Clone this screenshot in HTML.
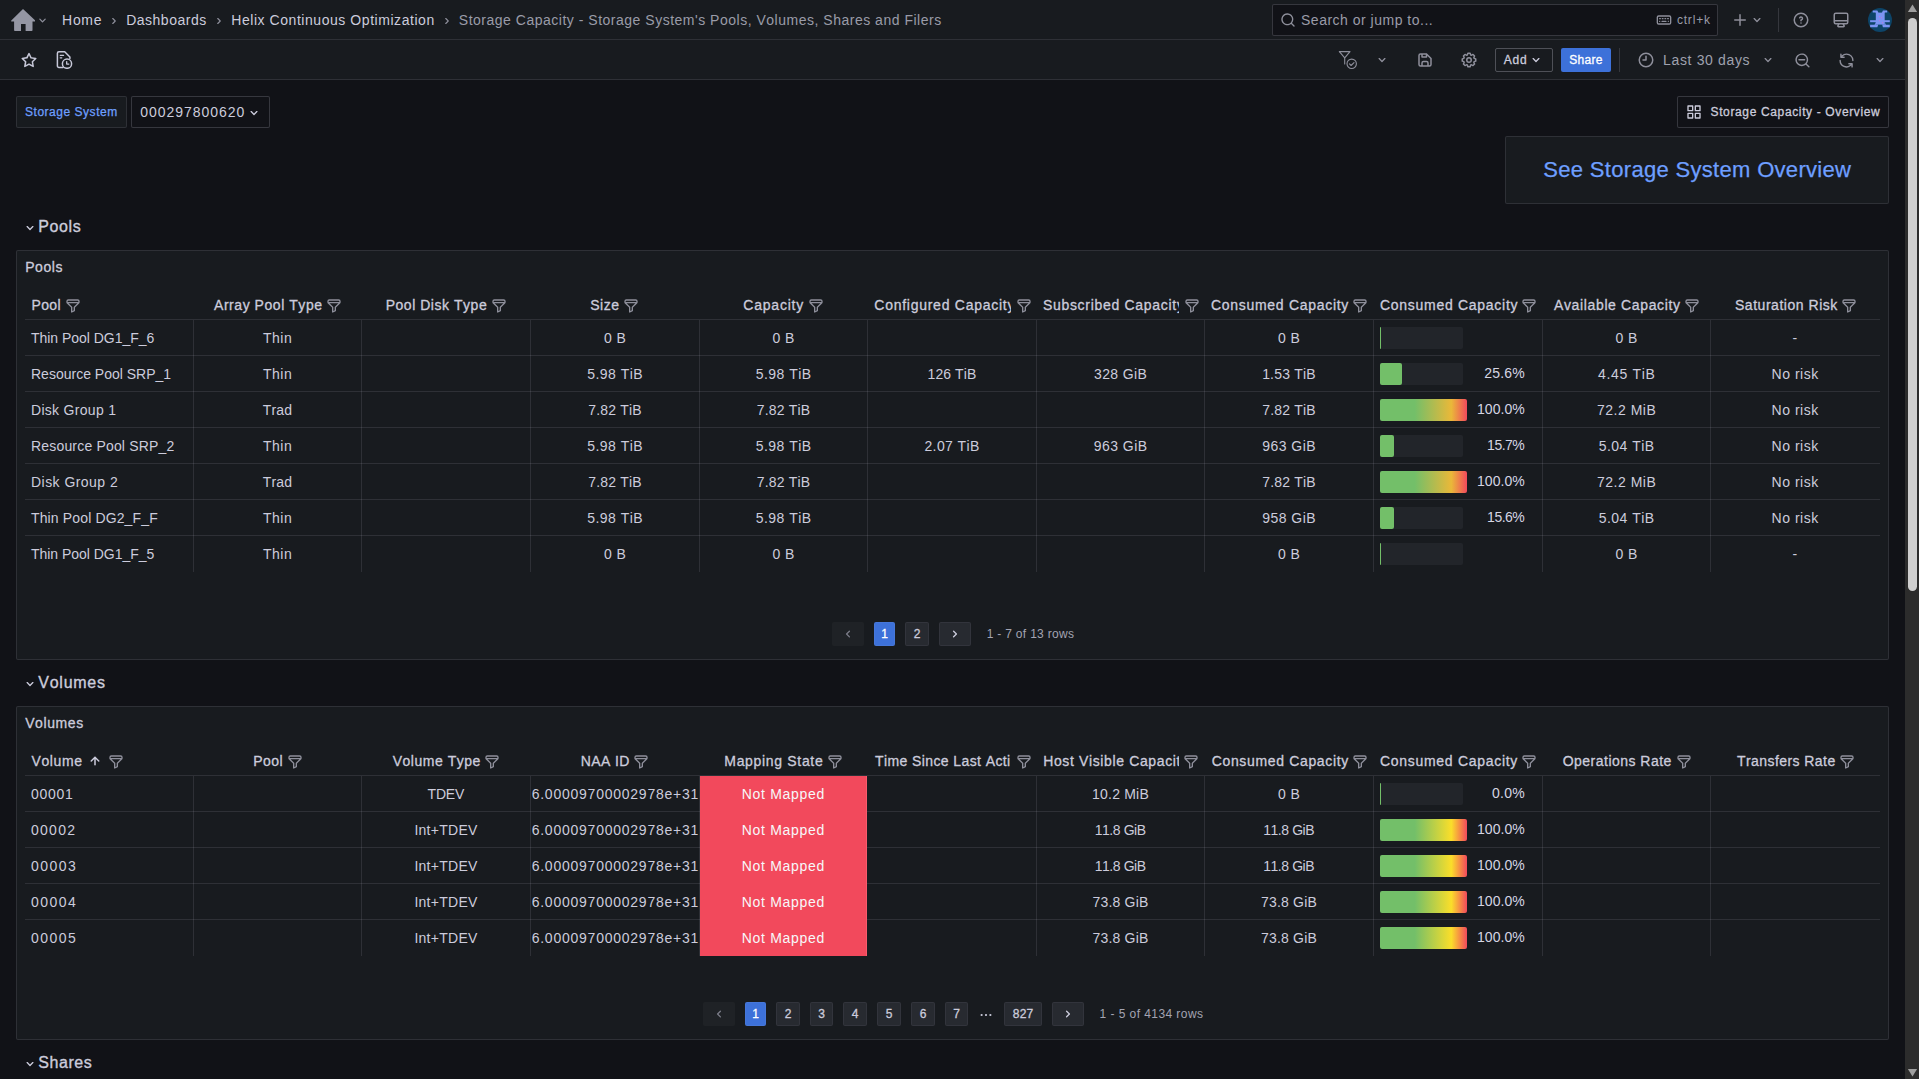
<!DOCTYPE html>
<html lang="en"><head><meta charset="utf-8"><title>Storage Capacity - Storage System's Pools, Volumes, Shares and Filers</title>
<style>
*{box-sizing:border-box;margin:0;padding:0}
html,body{width:1919px;height:1079px;overflow:hidden;background:#111217}
body{position:relative;font-family:"Liberation Sans",sans-serif;font-size:14px;color:#ccccdc;font-kerning:none;-webkit-font-smoothing:antialiased}
.t{position:absolute;white-space:nowrap;display:block}
.b{position:absolute}
.i{position:absolute;display:block}
.hl{position:absolute;height:1px;background:rgba(204,204,220,0.12)}
.vl{position:absolute;width:1px;background:rgba(204,204,220,0.12)}
.panel{position:absolute;background:#181b1f;border:1px solid rgba(204,204,220,0.12);border-radius:2px}
.pg{position:absolute;height:24px;border-radius:2px;background:rgba(204,204,220,0.09);border:1px solid rgba(204,204,220,0.07)}
.clip{position:absolute;overflow:hidden}
</style></head><body>

<div class="b" style="left:0px;top:0px;width:1905px;height:40px;background:#181b1f;border-bottom:1px solid rgba(204,204,220,0.12)"></div>
<div class="b" style="left:0px;top:40px;width:1905px;height:40px;background:#181b1f;border-bottom:1px solid rgba(204,204,220,0.12)"></div>
<svg class="i" style="left:11.00px;top:8.00px" width="24" height="24" viewBox="0 0 24 24" fill="#9496a3"><path d="M12 1.100.3 12.600a.55.55 0 0 0 .4.950H3.100v8.700a.8.8 0 0 0 .8.800H10V16h4.600v7.050h6.100a.8.8 0 0 0 .8-.800V13.550h2.400a.55.55 0 0 0 .4-.950Z"/></svg>
<svg class="i" style="left:34.50px;top:13.00px" width="15" height="15" viewBox="0 0 24 24" fill="#8e8f9b"><path d="M17,9.17a1,1,0,0,0-1.41,0L12,12.71,8.46,9.17a1,1,0,0,0-1.41,0,1,1,0,0,0,0,1.42l4.24,4.24a1,1,0,0,0,1.42,0L17,10.59A1,1,0,0,0,17,9.17Z"/></svg>
<span class="t" style="left:62.10px;top:10.00px;font-size:14px;line-height:20px;color:#ccccdc;letter-spacing:0.685px;">Home</span>
<svg class="i" style="left:107.00px;top:13.50px" width="14" height="14" viewBox="0 0 24 24" fill="#8e8f9b"><path d="M14.83,11.29,10.59,7.05a1,1,0,0,0-1.42,0,1,1,0,0,0,0,1.41L12.71,12,9.17,15.54a1,1,0,0,0,0,1.41,1,1,0,0,0,.71.29,1,1,0,0,0,.71-.29l4.24-4.24A1,1,0,0,0,14.83,11.29Z"/></svg>
<span class="t" style="left:126.20px;top:10.00px;font-size:14px;line-height:20px;color:#ccccdc;letter-spacing:0.501px;">Dashboards</span>
<svg class="i" style="left:212.00px;top:13.50px" width="14" height="14" viewBox="0 0 24 24" fill="#8e8f9b"><path d="M14.83,11.29,10.59,7.05a1,1,0,0,0-1.42,0,1,1,0,0,0,0,1.41L12.71,12,9.17,15.54a1,1,0,0,0,0,1.41,1,1,0,0,0,.71.29,1,1,0,0,0,.71-.29l4.24-4.24A1,1,0,0,0,14.83,11.29Z"/></svg>
<span class="t" style="left:231.30px;top:10.00px;font-size:14px;line-height:20px;color:#ccccdc;letter-spacing:0.549px;">Helix Continuous Optimization</span>
<svg class="i" style="left:440.00px;top:13.50px" width="14" height="14" viewBox="0 0 24 24" fill="#8e8f9b"><path d="M14.83,11.29,10.59,7.05a1,1,0,0,0-1.42,0,1,1,0,0,0,0,1.41L12.71,12,9.17,15.54a1,1,0,0,0,0,1.41,1,1,0,0,0,.71.29,1,1,0,0,0,.71-.29l4.24-4.24A1,1,0,0,0,14.83,11.29Z"/></svg>
<span class="t" style="left:458.80px;top:10.00px;font-size:14px;line-height:20px;color:#9a9ba8;letter-spacing:0.509px;">Storage Capacity - Storage System&#x27;s Pools, Volumes, Shares and Filers</span>
<div class="b" style="left:1272px;top:4px;width:446px;height:32px;background:#111217;border:1px solid rgba(204,204,220,0.2);border-radius:2px"></div>
<svg class="i" style="left:1280.00px;top:12.00px" width="16" height="16" viewBox="0 0 24 24" fill="#8e8f9b"><path d="M21.71,20.29,18,16.61A9,9,0,1,0,16.61,18l3.68,3.68a1,1,0,0,0,1.42,0A1,1,0,0,0,21.71,20.29ZM11,18a7,7,0,1,1,7-7A7,7,0,0,1,11,18Z"/></svg>
<span class="t" style="left:1301.00px;top:10.00px;font-size:14px;line-height:20px;color:#9a9ba8;letter-spacing:0.502px;">Search or jump to...</span>
<svg class="i" style="left:1656.00px;top:12.00px" width="16" height="16" viewBox="0 0 24 24" fill="#8e8f9b"><path d="M6.21,13.29a.93.93,0,0,0-.33-.21,1,1,0,0,0-.76,0,.9.9,0,0,0-.54.54,1,1,0,1,0,1.84,0A1,1,0,0,0,6.21,13.29ZM13.5,11h1a1,1,0,0,0,0-2h-1a1,1,0,0,0,0,2Zm-4,0h1a1,1,0,0,0,0-2h-1a1,1,0,0,0,0,2Zm-3-2h-1a1,1,0,0,0,0,2h1a1,1,0,0,0,0-2ZM20,5H4A3,3,0,0,0,1,8v8a3,3,0,0,0,3,3H20a3,3,0,0,0,3-3V8A3,3,0,0,0,20,5Zm1,11a1,1,0,0,1-1,1H4a1,1,0,0,1-1-1V8A1,1,0,0,1,4,7H20a1,1,0,0,1,1,1Zm-6-3H9a1,1,0,0,0,0,2h6a1,1,0,0,0,0-2Zm3.5-4h-1a1,1,0,0,0,0,2h1a1,1,0,0,0,0-2Zm.71,4.29a1,1,0,0,0-.33-.21,1,1,0,0,0-.76,0,.93.93,0,0,0-.33.21,1,1,0,0,0-.21.33A1,1,0,1,0,19.5,14a.84.84,0,0,0-.08-.38A1,1,0,0,0,19.21,13.29Z"/></svg>
<span class="t" style="left:1676.90px;top:11.00px;font-size:12px;line-height:18px;color:#9a9ba8;letter-spacing:0.819px;">ctrl+k</span>
<svg class="i" style="left:1731.00px;top:11.00px" width="18" height="18" viewBox="0 0 24 24" fill="#8e8f9b"><path d="M19,11H13V5a1,1,0,0,0-2,0v6H5a1,1,0,0,0,0,2h6v6a1,1,0,0,0,2,0V13h6a1,1,0,0,0,0-2Z"/></svg>
<svg class="i" style="left:1749.00px;top:12.00px" width="16" height="16" viewBox="0 0 24 24" fill="#8e8f9b"><path d="M17,9.17a1,1,0,0,0-1.41,0L12,12.71,8.46,9.17a1,1,0,0,0-1.41,0,1,1,0,0,0,0,1.42l4.24,4.24a1,1,0,0,0,1.42,0L17,10.59A1,1,0,0,0,17,9.17Z"/></svg>
<div class="b" style="left:1778px;top:8px;width:1px;height:24px;background:rgba(204,204,220,0.16)"></div>
<svg class="i" style="left:1792.00px;top:11.00px" width="18" height="18" viewBox="0 0 24 24" fill="#8e8f9b"><path d="M11.29,15.29a1.58,1.58,0,0,0-.12.15.76.76,0,0,0-.09.18.64.64,0,0,0-.06.18,1.36,1.36,0,0,0,0,.2.84.84,0,0,0,.08.38.9.9,0,0,0,.54.54.94.94,0,0,0,.76,0,.9.9,0,0,0,.54-.54A1,1,0,0,0,13,16a1,1,0,0,0-.29-.71A1,1,0,0,0,11.29,15.29ZM12,2A10,10,0,1,0,22,12,10,10,0,0,0,12,2Zm0,18a8,8,0,1,1,8-8A8,8,0,0,1,12,20ZM12,7A3,3,0,0,0,9.4,8.5a1,1,0,1,0,1.73,1A1,1,0,0,1,12,9a1,1,0,0,1,0,2,1,1,0,0,0-1,1v1a1,1,0,0,0,2,0v-.18A3,3,0,0,0,12,7Z"/></svg>
<svg class="i" style="left:1832.00px;top:11.00px" width="18" height="18" viewBox="0 0 24 24" fill="#8e8f9b"><path d="M19,2H5A3,3,0,0,0,2,5V15a3,3,0,0,0,3,3H7.64l-.58,1a2,2,0,0,0,0,2,2,2,0,0,0,1.75,1h6.46A2,2,0,0,0,17,21a2,2,0,0,0,0-2l-.59-1H19a3,3,0,0,0,3-3V5A3,3,0,0,0,19,2ZM8.77,20,10,18H14l1.2,2ZM20,15a1,1,0,0,1-1,1H5a1,1,0,0,1-1-1V14H20Zm0-3H4V5A1,1,0,0,1,5,4H19a1,1,0,0,1,1,1Z"/></svg>
<svg class="i" style="left:1868px;top:8px" width="24" height="24" viewBox="0 0 24 24"><circle cx="12" cy="12" r="12" fill="#0d4468"/><g fill="#7b94f3"><path d="M7.800 4.600h8.900v12H7.800z"/><path d="M4.700 2.400h4.700l1.100 2.500H8l-.7-.300H4.700z"/><path d="M19.200 2.400h-4.300l-1.100 2.500h2.600l.7-.300h2.100z"/><path d="M2.100 12.200h19.700v2H2.100z"/><path d="M7.800 14 6.600 16.700H2.100v2.600h7.300l.8-2.900H7.800z"/><path d="M16.700 14l1.100 2.700h4v2.600h-6.900l-.7-2.900h2.500z"/></g><g fill="#d070d8"><rect x="11.100" y="8.300" width=".9" height=".9"/><rect x="13.100" y="9.300" width=".9" height=".9"/><rect x="11.100" y="12.300" width=".9" height=".9"/><rect x="14.100" y="14.300" width=".9" height=".9"/></g></svg>
<svg class="i" style="left:19.70px;top:50.70px" width="18" height="18" viewBox="0 0 24 24" fill="#c7c8d8"><path d="M22,9.67A1,1,0,0,0,21.14,9l-5.69-.83L12.9,3a1,1,0,0,0-1.8,0L8.55,8.16,2.86,9a1,1,0,0,0-.81.68,1,1,0,0,0,.25,1l4.13,4-1,5.68A1,1,0,0,0,6.9,21.44L12,18.77l5.1,2.67a.93.93,0,0,0,.46.12,1,1,0,0,0,.59-.19,1,1,0,0,0,.4-1l-1-5.68,4.13-4A1,1,0,0,0,22,9.67Zm-6.15,4a1,1,0,0,0-.29.88l.72,4.2-3.76-2a1.06,1.06,0,0,0-.94,0l-3.76,2,.72-4.2a1,1,0,0,0-.29-.88l-3-3,4.21-.61a1,1,0,0,0,.76-.55L12,5.7l1.88,3.82a1,1,0,0,0,.76.55l4.21.61Z"/></svg>
<svg class="i" style="left:54.900px;top:50px" width="19" height="19" viewBox="0 0 19 19" fill="none" stroke="#c7c8d8" stroke-width="1.500" stroke-linecap="round" stroke-linejoin="round"><path d="M8 17.400H3.900a1.500 1.500 0 0 1-1.500-1.500V3.200a1.500 1.500 0 0 1 1.500-1.500h5.800l5.200 5.300v1.600"/><path d="M5.200 5.300h3.400M5.200 7.800h1.600" stroke-width="1.200"/><circle cx="12" cy="13.700" r="4.600" fill="#181b1f"/><path d="M11.700 11.600v2.500h2.100" stroke-width="1.300"/></svg>
<svg class="i" style="left:1338px;top:50px" width="20" height="20" viewBox="0 0 20 20" fill="none" stroke="#8e8f9b" stroke-width="1.100" stroke-linecap="round" stroke-linejoin="round"><path d="M1.400 1.600h10.600L6.700 7.800v6.200"/><path d="M1.400 1.600 6.700 7.800"/><circle cx="13.700" cy="13.800" r="4.700" fill="#181b1f"/><path d="M11.500 13.900l1.600 1.600 2.900-2.900"/></svg>
<svg class="i" style="left:1374.00px;top:52.00px" width="16" height="16" viewBox="0 0 24 24" fill="#8e8f9b"><path d="M17,9.17a1,1,0,0,0-1.41,0L12,12.71,8.46,9.17a1,1,0,0,0-1.41,0,1,1,0,0,0,0,1.42l4.24,4.24a1,1,0,0,0,1.42,0L17,10.59A1,1,0,0,0,17,9.17Z"/></svg>
<svg class="i" style="left:1416.00px;top:51.00px" width="18" height="18" viewBox="0 0 24 24" fill="#8e8f9b"><path d="M20.71,9.29l-6-6a1,1,0,0,0-.32-.21A1.09,1.09,0,0,0,14,3H6A3,3,0,0,0,3,6V18a3,3,0,0,0,3,3H18a3,3,0,0,0,3-3V10A1,1,0,0,0,20.71,9.29ZM9,5h4V7H9Zm6,14H9V16a1,1,0,0,1,1-1h4a1,1,0,0,1,1,1Zm4-1a1,1,0,0,1-1,1H17V16a3,3,0,0,0-3-3H10a3,3,0,0,0-3,3v3H6a1,1,0,0,1-1-1V6A1,1,0,0,1,6,5H7V8A1,1,0,0,0,8,9h6a1,1,0,0,0,1-1V6.41l4,4Z"/></svg>
<svg class="i" style="left:1460.00px;top:51.00px" width="18" height="18" viewBox="0 0 24 24" fill="#8e8f9b"><path d="M21.32,9.55l-1.89-.63.89-1.78A1,1,0,0,0,20.13,6L18,3.87a1,1,0,0,0-1.15-.19l-1.78.89-.63-1.89A1,1,0,0,0,13.5,2h-3a1,1,0,0,0-.95.68L8.92,4.57,7.14,3.68A1,1,0,0,0,6,3.87L3.87,6a1,1,0,0,0-.19,1.15l.89,1.78-1.89.63A1,1,0,0,0,2,10.5v3a1,1,0,0,0,.68.95l1.89.63-.89,1.78A1,1,0,0,0,3.87,18L6,20.13a1,1,0,0,0,1.15.19l1.78-.89.63,1.89a1,1,0,0,0,.95.68h3a1,1,0,0,0,.95-.68l.63-1.89,1.78.89A1,1,0,0,0,18,20.13L20.13,18a1,1,0,0,0,.19-1.15l-.89-1.78,1.89-.63A1,1,0,0,0,22,13.5v-3A1,1,0,0,0,21.32,9.55ZM20,12.78l-1.2.4A2,2,0,0,0,17.64,16l.57,1.14-1.1,1.1L16,17.64a2,2,0,0,0-2.79,1.16l-.4,1.2H11.22l-.4-1.2A2,2,0,0,0,8,17.64l-1.14.57-1.1-1.1L6.36,16A2,2,0,0,0,5.2,13.18L4,12.78V11.22l1.2-.4A2,2,0,0,0,6.36,8L5.79,6.89l1.1-1.1L8,6.36A2,2,0,0,0,10.82,5.2l.4-1.2h1.56l.4,1.2A2,2,0,0,0,16,6.36l1.14-.57,1.1,1.1L17.64,8a2,2,0,0,0,1.16,2.79l1.2.4ZM12,8a4,4,0,1,0,4,4A4,4,0,0,0,12,8Zm0,6a2,2,0,1,1,2-2A2,2,0,0,1,12,14Z"/></svg>
<div class="b" style="left:1495px;top:48px;width:58px;height:24px;border:1px solid rgba(204,204,220,0.30);border-radius:2px"></div>
<span class="t" style="left:1503.80px;top:51.00px;font-size:12px;line-height:18px;color:#ccccdc;letter-spacing:0.774px;-webkit-text-stroke:0.3px #ccccdc;">Add</span>
<svg class="i" style="left:1528.00px;top:52.00px" width="16" height="16" viewBox="0 0 24 24" fill="#ccccdc"><path d="M17,9.17a1,1,0,0,0-1.41,0L12,12.71,8.46,9.17a1,1,0,0,0-1.41,0,1,1,0,0,0,0,1.42l4.24,4.24a1,1,0,0,0,1.42,0L17,10.59A1,1,0,0,0,17,9.17Z"/></svg>
<div class="b" style="left:1561px;top:48px;width:50px;height:24px;background:#3d71d9;border-radius:2px"></div>
<span class="t" style="left:1569.20px;top:51.00px;font-size:12px;line-height:18px;color:#ffffff;letter-spacing:0.319px;-webkit-text-stroke:0.3px #ffffff;">Share</span>
<div class="b" style="left:1619px;top:48px;width:1px;height:24px;background:rgba(204,204,220,0.16)"></div>
<svg class="i" style="left:1637.00px;top:51.00px" width="18" height="18" viewBox="0 0 24 24" fill="#8e8f9b"><path d="M12,2A10,10,0,1,0,22,12,10.01,10.01,0,0,0,12,2Zm0,18a8,8,0,1,1,8-8A8.01,8.01,0,0,1,12,20ZM12,6a1,1,0,0,0-1,1v4H8a1,1,0,0,0,0,2h4a1,1,0,0,0,1-1V7A1,1,0,0,0,12,6Z"/></svg>
<span class="t" style="left:1663.10px;top:50.00px;font-size:14px;line-height:20px;color:#9fa1ae;letter-spacing:0.647px;">Last 30 days</span>
<svg class="i" style="left:1760.00px;top:52.00px" width="16" height="16" viewBox="0 0 24 24" fill="#8e8f9b"><path d="M17,9.17a1,1,0,0,0-1.41,0L12,12.71,8.46,9.17a1,1,0,0,0-1.41,0,1,1,0,0,0,0,1.42l4.24,4.24a1,1,0,0,0,1.42,0L17,10.59A1,1,0,0,0,17,9.17Z"/></svg>
<svg class="i" style="left:1793.50px;top:51.50px" width="17" height="17" viewBox="0 0 24 24" fill="#8e8f9b"><path d="M21.71,20.29,18,16.61A9,9,0,1,0,16.61,18l3.68,3.68a1,1,0,0,0,1.42,0A1,1,0,0,0,21.71,20.29ZM11,18a7,7,0,1,1,7-7A7,7,0,0,1,11,18ZM15,10H7a1,1,0,0,0,0,2h8a1,1,0,0,0,0-2Z"/></svg>
<svg class="i" style="left:1837.50px;top:51.50px" width="17" height="17" viewBox="0 0 24 24" fill="#8e8f9b"><path d="M19.91,15.51H15.38a1,1,0,0,0,0,2h2.4A8,8,0,0,1,4,12a1,1,0,0,0-2,0,10,10,0,0,0,16.88,7.23V21a1,1,0,0,0,2,0V16.5A1,1,0,0,0,19.91,15.51ZM12,2A10,10,0,0,0,5.12,4.77V3a1,1,0,0,0-2,0V7.5a1,1,0,0,0,1,1h4.5a1,1,0,0,0,0-2H6.22A8,8,0,0,1,20,12a1,1,0,0,0,2,0A10,10,0,0,0,12,2Z"/></svg>
<svg class="i" style="left:1872.00px;top:52.00px" width="16" height="16" viewBox="0 0 24 24" fill="#8e8f9b"><path d="M17,9.17a1,1,0,0,0-1.41,0L12,12.71,8.46,9.17a1,1,0,0,0-1.41,0,1,1,0,0,0,0,1.42l4.24,4.24a1,1,0,0,0,1.42,0L17,10.59A1,1,0,0,0,17,9.17Z"/></svg>
<div class="b" style="left:16px;top:96px;width:111px;height:32px;background:#181b1f;border:1px solid rgba(204,204,220,0.12);border-radius:2px"></div>
<span class="t" style="left:25.00px;top:103.30px;font-size:12px;line-height:18px;color:#6e9fff;letter-spacing:0.525px;-webkit-text-stroke:0.25px #6e9fff;">Storage System</span>
<div class="b" style="left:131px;top:96px;width:139px;height:32px;background:#111217;border:1px solid rgba(204,204,220,0.2);border-radius:2px"></div>
<span class="t" style="left:140.20px;top:102.00px;font-size:14px;line-height:20px;color:#ccccdc;letter-spacing:0.970px;">000297800620</span>
<svg class="i" style="left:245.80px;top:104.50px" width="16" height="16" viewBox="0 0 24 24" fill="#ccccdc"><path d="M17,9.17a1,1,0,0,0-1.41,0L12,12.71,8.46,9.17a1,1,0,0,0-1.41,0,1,1,0,0,0,0,1.42l4.24,4.24a1,1,0,0,0,1.42,0L17,10.59A1,1,0,0,0,17,9.17Z"/></svg>
<div class="b" style="left:1677px;top:96px;width:212px;height:32px;border:1px solid rgba(204,204,220,0.2);border-radius:2px;background:#111217"></div>
<svg class="i" style="left:1685.70px;top:104.00px" width="16" height="16" viewBox="0 0 24 24" fill="#ccccdc"><path d="M10,13H3a1,1,0,0,0-1,1v7a1,1,0,0,0,1,1h7a1,1,0,0,0,1-1V14A1,1,0,0,0,10,13ZM9,20H4V15H9ZM21,2H14a1,1,0,0,0-1,1v7a1,1,0,0,0,1,1h7a1,1,0,0,0,1-1V3A1,1,0,0,0,21,2ZM20,9H15V4h5Zm1,4H14a1,1,0,0,0-1,1v7a1,1,0,0,0,1,1h7a1,1,0,0,0,1-1V14A1,1,0,0,0,21,13Zm-1,7H15V15h5ZM10,2H3A1,1,0,0,0,2,3v7a1,1,0,0,0,1,1h7a1,1,0,0,0,1-1V3A1,1,0,0,0,10,2ZM9,9H4V4H9Z"/></svg>
<span class="t" style="left:1710.50px;top:103.30px;font-size:12px;line-height:18px;color:#ccccdc;letter-spacing:0.637px;-webkit-text-stroke:0.3px #ccccdc;">Storage Capacity - Overview</span>
<div class="panel" style="left:1505px;top:136px;width:384px;height:68px"></div>
<span class="t" style="left:1543.30px;top:155.80px;font-size:22px;line-height:28px;color:#6e9fff;letter-spacing:0.313px;-webkit-text-stroke:0.25px #6e9fff;">See Storage System Overview</span>
<svg class="i" style="left:22.00px;top:220.00px" width="16" height="16" viewBox="0 0 24 24" fill="#ccccdc"><path d="M17,9.17a1,1,0,0,0-1.41,0L12,12.71,8.46,9.17a1,1,0,0,0-1.41,0,1,1,0,0,0,0,1.42l4.24,4.24a1,1,0,0,0,1.42,0L17,10.59A1,1,0,0,0,17,9.17Z"/></svg>
<span class="t" style="left:38.30px;top:215.50px;font-size:16px;line-height:22px;color:#ccccdc;letter-spacing:0.619px;-webkit-text-stroke:0.35px #ccccdc;">Pools</span>
<svg class="i" style="left:22.00px;top:676.00px" width="16" height="16" viewBox="0 0 24 24" fill="#ccccdc"><path d="M17,9.17a1,1,0,0,0-1.41,0L12,12.71,8.46,9.17a1,1,0,0,0-1.41,0,1,1,0,0,0,0,1.42l4.24,4.24a1,1,0,0,0,1.42,0L17,10.59A1,1,0,0,0,17,9.17Z"/></svg>
<span class="t" style="left:38.30px;top:671.50px;font-size:16px;line-height:22px;color:#ccccdc;letter-spacing:0.742px;-webkit-text-stroke:0.35px #ccccdc;">Volumes</span>
<svg class="i" style="left:22.00px;top:1056.00px" width="16" height="16" viewBox="0 0 24 24" fill="#ccccdc"><path d="M17,9.17a1,1,0,0,0-1.41,0L12,12.71,8.46,9.17a1,1,0,0,0-1.41,0,1,1,0,0,0,0,1.42l4.24,4.24a1,1,0,0,0,1.42,0L17,10.59A1,1,0,0,0,17,9.17Z"/></svg>
<span class="t" style="left:38.30px;top:1051.50px;font-size:16px;line-height:22px;color:#ccccdc;letter-spacing:0.541px;-webkit-text-stroke:0.35px #ccccdc;">Shares</span>
<div class="panel" style="left:16px;top:250px;width:1873px;height:410px"></div>
<span class="t" style="left:25.20px;top:257.00px;font-size:14px;line-height:20px;color:#ccccdc;letter-spacing:0.570px;-webkit-text-stroke:0.3px #ccccdc;">Pools</span>
<div class="hl" style="left:25px;top:319px;width:1855px"></div>
<span class="t" style="left:31.50px;top:295.20px;font-size:14px;line-height:20px;color:#ccccdc;letter-spacing:0.359px;-webkit-text-stroke:0.3px #ccccdc;">Pool</span>
<svg class="i" style="left:65.20px;top:298.00px" width="16" height="16" viewBox="0 0 24 24" fill="#8e8f9b"><path d="M19,2H5A3,3,0,0,0,2,5V6.17a3,3,0,0,0,.25,1.2l0,.06a2.81,2.81,0,0,0,.59.86L9,14.41V21a1,1,0,0,0,.47.85A1,1,0,0,0,10,22a1,1,0,0,0,.45-.11l4-2A1,1,0,0,0,15,19V14.41l6.12-6.12a2.81,2.81,0,0,0,.59-.86l0-.06A3,3,0,0,0,22,6.17V5A3,3,0,0,0,19,2ZM13.29,13.29A1,1,0,0,0,13,14v4.38l-2,1V14a1,1,0,0,0-.29-.71L5.41,8H18.59ZM20,6H4V5A1,1,0,0,1,5,4H19a1,1,0,0,1,1,1Z"/></svg>
<span class="t" style="left:214.00px;top:295.20px;font-size:14px;line-height:20px;color:#ccccdc;letter-spacing:0.545px;-webkit-text-stroke:0.3px #ccccdc;">Array Pool Type</span>
<svg class="i" style="left:325.50px;top:298.00px" width="16" height="16" viewBox="0 0 24 24" fill="#8e8f9b"><path d="M19,2H5A3,3,0,0,0,2,5V6.17a3,3,0,0,0,.25,1.2l0,.06a2.81,2.81,0,0,0,.59.86L9,14.41V21a1,1,0,0,0,.47.85A1,1,0,0,0,10,22a1,1,0,0,0,.45-.11l4-2A1,1,0,0,0,15,19V14.41l6.12-6.12a2.81,2.81,0,0,0,.59-.86l0-.06A3,3,0,0,0,22,6.17V5A3,3,0,0,0,19,2ZM13.29,13.29A1,1,0,0,0,13,14v4.38l-2,1V14a1,1,0,0,0-.29-.71L5.41,8H18.59ZM20,6H4V5A1,1,0,0,1,5,4H19a1,1,0,0,1,1,1Z"/></svg>
<span class="t" style="left:385.70px;top:295.20px;font-size:14px;line-height:20px;color:#ccccdc;letter-spacing:0.527px;-webkit-text-stroke:0.3px #ccccdc;">Pool Disk Type</span>
<svg class="i" style="left:490.50px;top:298.00px" width="16" height="16" viewBox="0 0 24 24" fill="#8e8f9b"><path d="M19,2H5A3,3,0,0,0,2,5V6.17a3,3,0,0,0,.25,1.2l0,.06a2.81,2.81,0,0,0,.59.86L9,14.41V21a1,1,0,0,0,.47.85A1,1,0,0,0,10,22a1,1,0,0,0,.45-.11l4-2A1,1,0,0,0,15,19V14.41l6.12-6.12a2.81,2.81,0,0,0,.59-.86l0-.06A3,3,0,0,0,22,6.17V5A3,3,0,0,0,19,2ZM13.29,13.29A1,1,0,0,0,13,14v4.38l-2,1V14a1,1,0,0,0-.29-.71L5.41,8H18.59ZM20,6H4V5A1,1,0,0,1,5,4H19a1,1,0,0,1,1,1Z"/></svg>
<span class="t" style="left:590.30px;top:295.20px;font-size:14px;line-height:20px;color:#ccccdc;letter-spacing:0.489px;-webkit-text-stroke:0.3px #ccccdc;">Size</span>
<svg class="i" style="left:622.50px;top:298.00px" width="16" height="16" viewBox="0 0 24 24" fill="#8e8f9b"><path d="M19,2H5A3,3,0,0,0,2,5V6.17a3,3,0,0,0,.25,1.2l0,.06a2.81,2.81,0,0,0,.59.86L9,14.41V21a1,1,0,0,0,.47.85A1,1,0,0,0,10,22a1,1,0,0,0,.45-.11l4-2A1,1,0,0,0,15,19V14.41l6.12-6.12a2.81,2.81,0,0,0,.59-.86l0-.06A3,3,0,0,0,22,6.17V5A3,3,0,0,0,19,2ZM13.29,13.29A1,1,0,0,0,13,14v4.38l-2,1V14a1,1,0,0,0-.29-.71L5.41,8H18.59ZM20,6H4V5A1,1,0,0,1,5,4H19a1,1,0,0,1,1,1Z"/></svg>
<span class="t" style="left:743.30px;top:295.20px;font-size:14px;line-height:20px;color:#ccccdc;letter-spacing:0.790px;-webkit-text-stroke:0.3px #ccccdc;">Capacity</span>
<svg class="i" style="left:807.50px;top:298.00px" width="16" height="16" viewBox="0 0 24 24" fill="#8e8f9b"><path d="M19,2H5A3,3,0,0,0,2,5V6.17a3,3,0,0,0,.25,1.2l0,.06a2.81,2.81,0,0,0,.59.86L9,14.41V21a1,1,0,0,0,.47.85A1,1,0,0,0,10,22a1,1,0,0,0,.45-.11l4-2A1,1,0,0,0,15,19V14.41l6.12-6.12a2.81,2.81,0,0,0,.59-.86l0-.06A3,3,0,0,0,22,6.17V5A3,3,0,0,0,19,2ZM13.29,13.29A1,1,0,0,0,13,14v4.38l-2,1V14a1,1,0,0,0-.29-.71L5.41,8H18.59ZM20,6H4V5A1,1,0,0,1,5,4H19a1,1,0,0,1,1,1Z"/></svg>
<div class="clip" style="left:872.30px;top:294.2px;width:138.60px;height:24px">
<span class="t" style="left:2.00px;top:1.00px;font-size:14px;line-height:20px;color:#ccccdc;letter-spacing:0.738px;-webkit-text-stroke:0.3px #ccccdc;">Configured Capacity</span>
</div>
<svg class="i" style="left:1015.50px;top:298.00px" width="16" height="16" viewBox="0 0 24 24" fill="#8e8f9b"><path d="M19,2H5A3,3,0,0,0,2,5V6.17a3,3,0,0,0,.25,1.2l0,.06a2.81,2.81,0,0,0,.59.86L9,14.41V21a1,1,0,0,0,.47.85A1,1,0,0,0,10,22a1,1,0,0,0,.45-.11l4-2A1,1,0,0,0,15,19V14.41l6.12-6.12a2.81,2.81,0,0,0,.59-.86l0-.06A3,3,0,0,0,22,6.17V5A3,3,0,0,0,19,2ZM13.29,13.29A1,1,0,0,0,13,14v4.38l-2,1V14a1,1,0,0,0-.29-.71L5.41,8H18.59ZM20,6H4V5A1,1,0,0,1,5,4H19a1,1,0,0,1,1,1Z"/></svg>
<div class="clip" style="left:1040.90px;top:294.2px;width:138.00px;height:24px">
<span class="t" style="left:2.00px;top:1.00px;font-size:14px;line-height:20px;color:#ccccdc;letter-spacing:0.700px;-webkit-text-stroke:0.3px #ccccdc;">Subscribed Capacity</span>
</div>
<svg class="i" style="left:1183.50px;top:298.00px" width="16" height="16" viewBox="0 0 24 24" fill="#8e8f9b"><path d="M19,2H5A3,3,0,0,0,2,5V6.17a3,3,0,0,0,.25,1.2l0,.06a2.81,2.81,0,0,0,.59.86L9,14.41V21a1,1,0,0,0,.47.85A1,1,0,0,0,10,22a1,1,0,0,0,.45-.11l4-2A1,1,0,0,0,15,19V14.41l6.12-6.12a2.81,2.81,0,0,0,.59-.86l0-.06A3,3,0,0,0,22,6.17V5A3,3,0,0,0,19,2ZM13.29,13.29A1,1,0,0,0,13,14v4.38l-2,1V14a1,1,0,0,0-.29-.71L5.41,8H18.59ZM20,6H4V5A1,1,0,0,1,5,4H19a1,1,0,0,1,1,1Z"/></svg>
<span class="t" style="left:1211.00px;top:295.20px;font-size:14px;line-height:20px;color:#ccccdc;letter-spacing:0.702px;-webkit-text-stroke:0.3px #ccccdc;">Consumed Capacity</span>
<svg class="i" style="left:1351.90px;top:298.00px" width="16" height="16" viewBox="0 0 24 24" fill="#8e8f9b"><path d="M19,2H5A3,3,0,0,0,2,5V6.17a3,3,0,0,0,.25,1.2l0,.06a2.81,2.81,0,0,0,.59.86L9,14.41V21a1,1,0,0,0,.47.85A1,1,0,0,0,10,22a1,1,0,0,0,.45-.11l4-2A1,1,0,0,0,15,19V14.41l6.12-6.12a2.81,2.81,0,0,0,.59-.86l0-.06A3,3,0,0,0,22,6.17V5A3,3,0,0,0,19,2ZM13.29,13.29A1,1,0,0,0,13,14v4.38l-2,1V14a1,1,0,0,0-.29-.71L5.41,8H18.59ZM20,6H4V5A1,1,0,0,1,5,4H19a1,1,0,0,1,1,1Z"/></svg>
<span class="t" style="left:1380.00px;top:295.20px;font-size:14px;line-height:20px;color:#ccccdc;letter-spacing:0.715px;-webkit-text-stroke:0.3px #ccccdc;">Consumed Capacity</span>
<svg class="i" style="left:1520.90px;top:298.00px" width="16" height="16" viewBox="0 0 24 24" fill="#8e8f9b"><path d="M19,2H5A3,3,0,0,0,2,5V6.17a3,3,0,0,0,.25,1.2l0,.06a2.81,2.81,0,0,0,.59.86L9,14.41V21a1,1,0,0,0,.47.85A1,1,0,0,0,10,22a1,1,0,0,0,.45-.11l4-2A1,1,0,0,0,15,19V14.41l6.12-6.12a2.81,2.81,0,0,0,.59-.86l0-.06A3,3,0,0,0,22,6.17V5A3,3,0,0,0,19,2ZM13.29,13.29A1,1,0,0,0,13,14v4.38l-2,1V14a1,1,0,0,0-.29-.71L5.41,8H18.59ZM20,6H4V5A1,1,0,0,1,5,4H19a1,1,0,0,1,1,1Z"/></svg>
<span class="t" style="left:1554.00px;top:295.20px;font-size:14px;line-height:20px;color:#ccccdc;letter-spacing:0.637px;-webkit-text-stroke:0.3px #ccccdc;">Available Capacity</span>
<svg class="i" style="left:1683.90px;top:298.00px" width="16" height="16" viewBox="0 0 24 24" fill="#8e8f9b"><path d="M19,2H5A3,3,0,0,0,2,5V6.17a3,3,0,0,0,.25,1.2l0,.06a2.81,2.81,0,0,0,.59.86L9,14.41V21a1,1,0,0,0,.47.85A1,1,0,0,0,10,22a1,1,0,0,0,.45-.11l4-2A1,1,0,0,0,15,19V14.41l6.12-6.12a2.81,2.81,0,0,0,.59-.86l0-.06A3,3,0,0,0,22,6.17V5A3,3,0,0,0,19,2ZM13.29,13.29A1,1,0,0,0,13,14v4.38l-2,1V14a1,1,0,0,0-.29-.71L5.41,8H18.59ZM20,6H4V5A1,1,0,0,1,5,4H19a1,1,0,0,1,1,1Z"/></svg>
<span class="t" style="left:1735.00px;top:295.20px;font-size:14px;line-height:20px;color:#ccccdc;letter-spacing:0.526px;-webkit-text-stroke:0.3px #ccccdc;">Saturation Risk</span>
<svg class="i" style="left:1840.90px;top:298.00px" width="16" height="16" viewBox="0 0 24 24" fill="#8e8f9b"><path d="M19,2H5A3,3,0,0,0,2,5V6.17a3,3,0,0,0,.25,1.2l0,.06a2.81,2.81,0,0,0,.59.86L9,14.41V21a1,1,0,0,0,.47.85A1,1,0,0,0,10,22a1,1,0,0,0,.45-.11l4-2A1,1,0,0,0,15,19V14.41l6.12-6.12a2.81,2.81,0,0,0,.59-.86l0-.06A3,3,0,0,0,22,6.17V5A3,3,0,0,0,19,2ZM13.29,13.29A1,1,0,0,0,13,14v4.38l-2,1V14a1,1,0,0,0-.29-.71L5.41,8H18.59ZM20,6H4V5A1,1,0,0,1,5,4H19a1,1,0,0,1,1,1Z"/></svg>
<div class="hl" style="left:25px;top:355px;width:1855px"></div>
<div class="hl" style="left:25px;top:391px;width:1855px"></div>
<div class="hl" style="left:25px;top:427px;width:1855px"></div>
<div class="hl" style="left:25px;top:463px;width:1855px"></div>
<div class="hl" style="left:25px;top:499px;width:1855px"></div>
<div class="hl" style="left:25px;top:535px;width:1855px"></div>
<div class="vl" style="left:193px;top:320px;height:252px"></div>
<div class="vl" style="left:361px;top:320px;height:252px"></div>
<div class="vl" style="left:530px;top:320px;height:252px"></div>
<div class="vl" style="left:699px;top:320px;height:252px"></div>
<div class="vl" style="left:867px;top:320px;height:252px"></div>
<div class="vl" style="left:1036px;top:320px;height:252px"></div>
<div class="vl" style="left:1204px;top:320px;height:252px"></div>
<div class="vl" style="left:1373px;top:320px;height:252px"></div>
<div class="vl" style="left:1542px;top:320px;height:252px"></div>
<div class="vl" style="left:1710px;top:320px;height:252px"></div>
<span class="t" style="left:31.00px;top:328.30px;font-size:14px;line-height:20px;color:#ccccdc;letter-spacing:-0.027px;">Thin Pool DG1_F_6</span>
<span class="t" style="left:263.05px;top:328.30px;font-size:14px;line-height:20px;color:#ccccdc;letter-spacing:0.489px;">Thin</span>
<span class="t" style="left:604.05px;top:328.30px;font-size:14px;line-height:20px;color:#ccccdc;letter-spacing:0.342px;">0 B</span>
<span class="t" style="left:772.55px;top:328.30px;font-size:14px;line-height:20px;color:#ccccdc;letter-spacing:0.342px;">0 B</span>
<span class="t" style="left:1278.05px;top:328.30px;font-size:14px;line-height:20px;color:#ccccdc;letter-spacing:0.342px;">0 B</span>
<span class="t" style="left:1615.55px;top:328.30px;font-size:14px;line-height:20px;color:#ccccdc;letter-spacing:0.342px;">0 B</span>
<span class="t" style="left:1792.57px;top:328.30px;font-size:14px;line-height:20px;color:#ccccdc;">-</span>
<div class="b" style="left:1380px;top:327px;width:83px;height:22px;border-radius:2px;background:rgba(204,204,220,0.06)"></div>
<div class="b" style="left:1380px;top:327px;width:1px;height:22px;border-radius:1px 0 0 1px;background:#73bf69"></div>
<span class="t" style="left:31.00px;top:364.30px;font-size:14px;line-height:20px;color:#ccccdc;">Resource Pool SRP_1</span>
<span class="t" style="left:263.05px;top:364.30px;font-size:14px;line-height:20px;color:#ccccdc;letter-spacing:0.489px;">Thin</span>
<span class="t" style="left:587.25px;top:364.30px;font-size:14px;line-height:20px;color:#ccccdc;letter-spacing:0.452px;">5.98 TiB</span>
<span class="t" style="left:755.75px;top:364.30px;font-size:14px;line-height:20px;color:#ccccdc;letter-spacing:0.452px;">5.98 TiB</span>
<span class="t" style="left:927.55px;top:364.30px;font-size:14px;line-height:20px;color:#ccccdc;letter-spacing:0.075px;">126 TiB</span>
<span class="t" style="left:1094.05px;top:364.30px;font-size:14px;line-height:20px;color:#ccccdc;letter-spacing:0.352px;">328 GiB</span>
<span class="t" style="left:1262.15px;top:364.30px;font-size:14px;line-height:20px;color:#ccccdc;letter-spacing:0.194px;">1.53 TiB</span>
<span class="t" style="left:1598.05px;top:364.30px;font-size:14px;line-height:20px;color:#ccccdc;letter-spacing:0.652px;">4.45 TiB</span>
<span class="t" style="left:1771.55px;top:364.30px;font-size:14px;line-height:20px;color:#ccccdc;letter-spacing:0.523px;">No risk</span>
<div class="b" style="left:1380px;top:363px;width:83px;height:22px;border-radius:2px;background:rgba(204,204,220,0.06)"></div>
<div class="b" style="left:1380px;top:363px;width:22px;height:22px;border-radius:2px;background:#73bf69"></div>
<span class="t" style="left:1484.20px;top:363.20px;font-size:14px;line-height:20px;color:#d5d5e3;letter-spacing:0.226px;">25.6%</span>
<span class="t" style="left:31.00px;top:400.30px;font-size:14px;line-height:20px;color:#ccccdc;letter-spacing:0.300px;">Disk Group 1</span>
<span class="t" style="left:262.75px;top:400.30px;font-size:14px;line-height:20px;color:#ccccdc;letter-spacing:0.171px;">Trad</span>
<span class="t" style="left:588.25px;top:400.30px;font-size:14px;line-height:20px;color:#ccccdc;letter-spacing:0.166px;">7.82 TiB</span>
<span class="t" style="left:756.75px;top:400.30px;font-size:14px;line-height:20px;color:#ccccdc;letter-spacing:0.166px;">7.82 TiB</span>
<span class="t" style="left:1262.25px;top:400.30px;font-size:14px;line-height:20px;color:#ccccdc;letter-spacing:0.166px;">7.82 TiB</span>
<span class="t" style="left:1597.05px;top:400.30px;font-size:14px;line-height:20px;color:#ccccdc;letter-spacing:0.493px;">72.2 MiB</span>
<span class="t" style="left:1771.55px;top:400.30px;font-size:14px;line-height:20px;color:#ccccdc;letter-spacing:0.523px;">No risk</span>
<div class="b" style="left:1380px;top:399px;width:87px;height:22px;border-radius:2px;background:linear-gradient(90deg,#73bf69,#73bf69 40%,#eab839 82%,#f2495c)"></div>
<span class="t" style="left:1477.00px;top:399.20px;font-size:14px;line-height:20px;color:#d5d5e3;letter-spacing:0.063px;">100.0%</span>
<span class="t" style="left:31.00px;top:436.30px;font-size:14px;line-height:20px;color:#ccccdc;letter-spacing:0.179px;">Resource Pool SRP_2</span>
<span class="t" style="left:263.05px;top:436.30px;font-size:14px;line-height:20px;color:#ccccdc;letter-spacing:0.489px;">Thin</span>
<span class="t" style="left:587.25px;top:436.30px;font-size:14px;line-height:20px;color:#ccccdc;letter-spacing:0.452px;">5.98 TiB</span>
<span class="t" style="left:755.75px;top:436.30px;font-size:14px;line-height:20px;color:#ccccdc;letter-spacing:0.452px;">5.98 TiB</span>
<span class="t" style="left:924.40px;top:436.30px;font-size:14px;line-height:20px;color:#ccccdc;letter-spacing:0.409px;">2.07 TiB</span>
<span class="t" style="left:1093.75px;top:436.30px;font-size:14px;line-height:20px;color:#ccccdc;letter-spacing:0.452px;">963 GiB</span>
<span class="t" style="left:1262.25px;top:436.30px;font-size:14px;line-height:20px;color:#ccccdc;letter-spacing:0.452px;">963 GiB</span>
<span class="t" style="left:1598.75px;top:436.30px;font-size:14px;line-height:20px;color:#ccccdc;letter-spacing:0.452px;">5.04 TiB</span>
<span class="t" style="left:1771.55px;top:436.30px;font-size:14px;line-height:20px;color:#ccccdc;letter-spacing:0.523px;">No risk</span>
<div class="b" style="left:1380px;top:435px;width:83px;height:22px;border-radius:2px;background:rgba(204,204,220,0.06)"></div>
<div class="b" style="left:1380px;top:435px;width:14px;height:22px;border-radius:2px;background:#73bf69"></div>
<span class="t" style="left:1487.10px;top:435.20px;font-size:14px;line-height:20px;color:#d5d5e3;letter-spacing:-0.499px;">15.7%</span>
<span class="t" style="left:31.00px;top:472.30px;font-size:14px;line-height:20px;color:#ccccdc;letter-spacing:0.455px;">Disk Group 2</span>
<span class="t" style="left:262.75px;top:472.30px;font-size:14px;line-height:20px;color:#ccccdc;letter-spacing:0.171px;">Trad</span>
<span class="t" style="left:588.25px;top:472.30px;font-size:14px;line-height:20px;color:#ccccdc;letter-spacing:0.166px;">7.82 TiB</span>
<span class="t" style="left:756.75px;top:472.30px;font-size:14px;line-height:20px;color:#ccccdc;letter-spacing:0.166px;">7.82 TiB</span>
<span class="t" style="left:1262.25px;top:472.30px;font-size:14px;line-height:20px;color:#ccccdc;letter-spacing:0.166px;">7.82 TiB</span>
<span class="t" style="left:1597.05px;top:472.30px;font-size:14px;line-height:20px;color:#ccccdc;letter-spacing:0.493px;">72.2 MiB</span>
<span class="t" style="left:1771.55px;top:472.30px;font-size:14px;line-height:20px;color:#ccccdc;letter-spacing:0.523px;">No risk</span>
<div class="b" style="left:1380px;top:471px;width:87px;height:22px;border-radius:2px;background:linear-gradient(90deg,#73bf69,#73bf69 40%,#eab839 82%,#f2495c)"></div>
<span class="t" style="left:1477.00px;top:471.20px;font-size:14px;line-height:20px;color:#d5d5e3;letter-spacing:0.063px;">100.0%</span>
<span class="t" style="left:31.00px;top:508.30px;font-size:14px;line-height:20px;color:#ccccdc;letter-spacing:0.138px;">Thin Pool DG2_F_F</span>
<span class="t" style="left:263.05px;top:508.30px;font-size:14px;line-height:20px;color:#ccccdc;letter-spacing:0.489px;">Thin</span>
<span class="t" style="left:587.25px;top:508.30px;font-size:14px;line-height:20px;color:#ccccdc;letter-spacing:0.452px;">5.98 TiB</span>
<span class="t" style="left:755.75px;top:508.30px;font-size:14px;line-height:20px;color:#ccccdc;letter-spacing:0.452px;">5.98 TiB</span>
<span class="t" style="left:1262.25px;top:508.30px;font-size:14px;line-height:20px;color:#ccccdc;letter-spacing:0.452px;">958 GiB</span>
<span class="t" style="left:1598.75px;top:508.30px;font-size:14px;line-height:20px;color:#ccccdc;letter-spacing:0.452px;">5.04 TiB</span>
<span class="t" style="left:1771.55px;top:508.30px;font-size:14px;line-height:20px;color:#ccccdc;letter-spacing:0.523px;">No risk</span>
<div class="b" style="left:1380px;top:507px;width:83px;height:22px;border-radius:2px;background:rgba(204,204,220,0.06)"></div>
<div class="b" style="left:1380px;top:507px;width:14px;height:22px;border-radius:2px;background:#73bf69"></div>
<span class="t" style="left:1487.10px;top:507.20px;font-size:14px;line-height:20px;color:#d5d5e3;letter-spacing:-0.499px;">15.6%</span>
<span class="t" style="left:31.00px;top:544.30px;font-size:14px;line-height:20px;color:#ccccdc;letter-spacing:-0.027px;">Thin Pool DG1_F_5</span>
<span class="t" style="left:263.05px;top:544.30px;font-size:14px;line-height:20px;color:#ccccdc;letter-spacing:0.489px;">Thin</span>
<span class="t" style="left:604.05px;top:544.30px;font-size:14px;line-height:20px;color:#ccccdc;letter-spacing:0.342px;">0 B</span>
<span class="t" style="left:772.55px;top:544.30px;font-size:14px;line-height:20px;color:#ccccdc;letter-spacing:0.342px;">0 B</span>
<span class="t" style="left:1278.05px;top:544.30px;font-size:14px;line-height:20px;color:#ccccdc;letter-spacing:0.342px;">0 B</span>
<span class="t" style="left:1615.55px;top:544.30px;font-size:14px;line-height:20px;color:#ccccdc;letter-spacing:0.342px;">0 B</span>
<span class="t" style="left:1792.57px;top:544.30px;font-size:14px;line-height:20px;color:#ccccdc;">-</span>
<div class="b" style="left:1380px;top:543px;width:83px;height:22px;border-radius:2px;background:rgba(204,204,220,0.06)"></div>
<div class="b" style="left:1380px;top:543px;width:1px;height:22px;border-radius:1px 0 0 1px;background:#73bf69"></div>
<div class="pg" style="left:832px;top:622px;width:32px;background:rgba(204,204,220,0.045);border:0"></div>
<svg class="i" style="left:840.00px;top:626.00px" width="16" height="16" viewBox="0 0 24 24" fill="#7b7c88"><path d="M11.29,12l3.54-3.54a1,1,0,0,0,0-1.41,1,1,0,0,0-1.42,0L9.17,11.29a1,1,0,0,0,0,1.42L13.41,17a1,1,0,0,0,.71.29,1,1,0,0,0,.71-.29,1,1,0,0,0,0-1.41Z"/></svg>
<div class="pg" style="left:874px;top:622px;width:21px;background:#3d71d9"></div>
<span class="t" style="left:881.16px;top:625.30px;font-size:12px;line-height:18px;color:#ffffff;-webkit-text-stroke:0.3px #ffffff;">1</span>
<div class="pg" style="left:905px;top:622px;width:24px"></div>
<span class="t" style="left:913.66px;top:625.30px;font-size:12px;line-height:18px;color:#ccccdc;-webkit-text-stroke:0.3px #ccccdc;">2</span>
<div class="pg" style="left:939px;top:622px;width:32px"></div>
<svg class="i" style="left:947.00px;top:626.00px" width="16" height="16" viewBox="0 0 24 24" fill="#ccccdc"><path d="M14.83,11.29,10.59,7.05a1,1,0,0,0-1.42,0,1,1,0,0,0,0,1.41L12.71,12,9.17,15.54a1,1,0,0,0,0,1.41,1,1,0,0,0,.71.29,1,1,0,0,0,.71-.29l4.24-4.24A1,1,0,0,0,14.83,11.29Z"/></svg>
<span class="t" style="left:986.70px;top:625.30px;font-size:12px;line-height:18px;color:#a3a4b2;letter-spacing:0.306px;">1 - 7 of 13 rows</span>
<div class="panel" style="left:16px;top:706px;width:1873px;height:334px"></div>
<span class="t" style="left:25.20px;top:713.00px;font-size:14px;line-height:20px;color:#ccccdc;letter-spacing:0.589px;-webkit-text-stroke:0.3px #ccccdc;">Volumes</span>
<div class="hl" style="left:25px;top:775px;width:1855px"></div>
<span class="t" style="left:31.50px;top:751.20px;font-size:14px;line-height:20px;color:#ccccdc;letter-spacing:0.606px;-webkit-text-stroke:0.3px #ccccdc;">Volume</span>
<svg class="i" style="left:107.50px;top:754.00px" width="16" height="16" viewBox="0 0 24 24" fill="#8e8f9b"><path d="M19,2H5A3,3,0,0,0,2,5V6.17a3,3,0,0,0,.25,1.2l0,.06a2.81,2.81,0,0,0,.59.86L9,14.41V21a1,1,0,0,0,.47.85A1,1,0,0,0,10,22a1,1,0,0,0,.45-.11l4-2A1,1,0,0,0,15,19V14.41l6.12-6.12a2.81,2.81,0,0,0,.59-.86l0-.06A3,3,0,0,0,22,6.17V5A3,3,0,0,0,19,2ZM13.29,13.29A1,1,0,0,0,13,14v4.38l-2,1V14a1,1,0,0,0-.29-.71L5.41,8H18.59ZM20,6H4V5A1,1,0,0,1,5,4H19a1,1,0,0,1,1,1Z"/></svg>
<span class="t" style="left:253.30px;top:751.20px;font-size:14px;line-height:20px;color:#ccccdc;letter-spacing:0.459px;-webkit-text-stroke:0.3px #ccccdc;">Pool</span>
<svg class="i" style="left:286.50px;top:754.00px" width="16" height="16" viewBox="0 0 24 24" fill="#8e8f9b"><path d="M19,2H5A3,3,0,0,0,2,5V6.17a3,3,0,0,0,.25,1.2l0,.06a2.81,2.81,0,0,0,.59.86L9,14.41V21a1,1,0,0,0,.47.85A1,1,0,0,0,10,22a1,1,0,0,0,.45-.11l4-2A1,1,0,0,0,15,19V14.41l6.12-6.12a2.81,2.81,0,0,0,.59-.86l0-.06A3,3,0,0,0,22,6.17V5A3,3,0,0,0,19,2ZM13.29,13.29A1,1,0,0,0,13,14v4.38l-2,1V14a1,1,0,0,0-.29-.71L5.41,8H18.59ZM20,6H4V5A1,1,0,0,1,5,4H19a1,1,0,0,1,1,1Z"/></svg>
<span class="t" style="left:392.70px;top:751.20px;font-size:14px;line-height:20px;color:#ccccdc;letter-spacing:0.512px;-webkit-text-stroke:0.3px #ccccdc;">Volume Type</span>
<svg class="i" style="left:484.20px;top:754.00px" width="16" height="16" viewBox="0 0 24 24" fill="#8e8f9b"><path d="M19,2H5A3,3,0,0,0,2,5V6.17a3,3,0,0,0,.25,1.2l0,.06a2.81,2.81,0,0,0,.59.86L9,14.41V21a1,1,0,0,0,.47.85A1,1,0,0,0,10,22a1,1,0,0,0,.45-.11l4-2A1,1,0,0,0,15,19V14.41l6.12-6.12a2.81,2.81,0,0,0,.59-.86l0-.06A3,3,0,0,0,22,6.17V5A3,3,0,0,0,19,2ZM13.29,13.29A1,1,0,0,0,13,14v4.38l-2,1V14a1,1,0,0,0-.29-.71L5.41,8H18.59ZM20,6H4V5A1,1,0,0,1,5,4H19a1,1,0,0,1,1,1Z"/></svg>
<span class="t" style="left:580.70px;top:751.20px;font-size:14px;line-height:20px;color:#ccccdc;letter-spacing:0.385px;-webkit-text-stroke:0.3px #ccccdc;">NAA ID</span>
<svg class="i" style="left:633.20px;top:754.00px" width="16" height="16" viewBox="0 0 24 24" fill="#8e8f9b"><path d="M19,2H5A3,3,0,0,0,2,5V6.17a3,3,0,0,0,.25,1.2l0,.06a2.81,2.81,0,0,0,.59.86L9,14.41V21a1,1,0,0,0,.47.85A1,1,0,0,0,10,22a1,1,0,0,0,.45-.11l4-2A1,1,0,0,0,15,19V14.41l6.12-6.12a2.81,2.81,0,0,0,.59-.86l0-.06A3,3,0,0,0,22,6.17V5A3,3,0,0,0,19,2ZM13.29,13.29A1,1,0,0,0,13,14v4.38l-2,1V14a1,1,0,0,0-.29-.71L5.41,8H18.59ZM20,6H4V5A1,1,0,0,1,5,4H19a1,1,0,0,1,1,1Z"/></svg>
<span class="t" style="left:724.30px;top:751.20px;font-size:14px;line-height:20px;color:#ccccdc;letter-spacing:0.676px;-webkit-text-stroke:0.3px #ccccdc;">Mapping State</span>
<svg class="i" style="left:826.50px;top:754.00px" width="16" height="16" viewBox="0 0 24 24" fill="#8e8f9b"><path d="M19,2H5A3,3,0,0,0,2,5V6.17a3,3,0,0,0,.25,1.2l0,.06a2.81,2.81,0,0,0,.59.86L9,14.41V21a1,1,0,0,0,.47.85A1,1,0,0,0,10,22a1,1,0,0,0,.45-.11l4-2A1,1,0,0,0,15,19V14.41l6.12-6.12a2.81,2.81,0,0,0,.59-.86l0-.06A3,3,0,0,0,22,6.17V5A3,3,0,0,0,19,2ZM13.29,13.29A1,1,0,0,0,13,14v4.38l-2,1V14a1,1,0,0,0-.29-.71L5.41,8H18.59ZM20,6H4V5A1,1,0,0,1,5,4H19a1,1,0,0,1,1,1Z"/></svg>
<div class="clip" style="left:873.00px;top:750.2px;width:137.20px;height:24px">
<span class="t" style="left:2.00px;top:1.00px;font-size:14px;line-height:20px;color:#ccccdc;letter-spacing:0.401px;-webkit-text-stroke:0.3px #ccccdc;">Time Since Last Activity</span>
</div>
<svg class="i" style="left:1015.50px;top:754.00px" width="16" height="16" viewBox="0 0 24 24" fill="#8e8f9b"><path d="M19,2H5A3,3,0,0,0,2,5V6.17a3,3,0,0,0,.25,1.2l0,.06a2.81,2.81,0,0,0,.59.86L9,14.41V21a1,1,0,0,0,.47.85A1,1,0,0,0,10,22a1,1,0,0,0,.45-.11l4-2A1,1,0,0,0,15,19V14.41l6.12-6.12a2.81,2.81,0,0,0,.59-.86l0-.06A3,3,0,0,0,22,6.17V5A3,3,0,0,0,19,2ZM13.29,13.29A1,1,0,0,0,13,14v4.38l-2,1V14a1,1,0,0,0-.29-.71L5.41,8H18.59ZM20,6H4V5A1,1,0,0,1,5,4H19a1,1,0,0,1,1,1Z"/></svg>
<div class="clip" style="left:1041.20px;top:750.2px;width:138.00px;height:24px">
<span class="t" style="left:2.00px;top:1.00px;font-size:14px;line-height:20px;color:#ccccdc;letter-spacing:0.629px;-webkit-text-stroke:0.3px #ccccdc;">Host Visible Capacity</span>
</div>
<svg class="i" style="left:1182.50px;top:754.00px" width="16" height="16" viewBox="0 0 24 24" fill="#8e8f9b"><path d="M19,2H5A3,3,0,0,0,2,5V6.17a3,3,0,0,0,.25,1.2l0,.06a2.81,2.81,0,0,0,.59.86L9,14.41V21a1,1,0,0,0,.47.85A1,1,0,0,0,10,22a1,1,0,0,0,.45-.11l4-2A1,1,0,0,0,15,19V14.41l6.12-6.12a2.81,2.81,0,0,0,.59-.86l0-.06A3,3,0,0,0,22,6.17V5A3,3,0,0,0,19,2ZM13.29,13.29A1,1,0,0,0,13,14v4.38l-2,1V14a1,1,0,0,0-.29-.71L5.41,8H18.59ZM20,6H4V5A1,1,0,0,1,5,4H19a1,1,0,0,1,1,1Z"/></svg>
<span class="t" style="left:1211.70px;top:751.20px;font-size:14px;line-height:20px;color:#ccccdc;letter-spacing:0.659px;-webkit-text-stroke:0.3px #ccccdc;">Consumed Capacity</span>
<svg class="i" style="left:1352.20px;top:754.00px" width="16" height="16" viewBox="0 0 24 24" fill="#8e8f9b"><path d="M19,2H5A3,3,0,0,0,2,5V6.17a3,3,0,0,0,.25,1.2l0,.06a2.81,2.81,0,0,0,.59.86L9,14.41V21a1,1,0,0,0,.47.85A1,1,0,0,0,10,22a1,1,0,0,0,.45-.11l4-2A1,1,0,0,0,15,19V14.41l6.12-6.12a2.81,2.81,0,0,0,.59-.86l0-.06A3,3,0,0,0,22,6.17V5A3,3,0,0,0,19,2ZM13.29,13.29A1,1,0,0,0,13,14v4.38l-2,1V14a1,1,0,0,0-.29-.71L5.41,8H18.59ZM20,6H4V5A1,1,0,0,1,5,4H19a1,1,0,0,1,1,1Z"/></svg>
<span class="t" style="left:1380.00px;top:751.20px;font-size:14px;line-height:20px;color:#ccccdc;letter-spacing:0.702px;-webkit-text-stroke:0.3px #ccccdc;">Consumed Capacity</span>
<svg class="i" style="left:1520.90px;top:754.00px" width="16" height="16" viewBox="0 0 24 24" fill="#8e8f9b"><path d="M19,2H5A3,3,0,0,0,2,5V6.17a3,3,0,0,0,.25,1.2l0,.06a2.81,2.81,0,0,0,.59.86L9,14.41V21a1,1,0,0,0,.47.85A1,1,0,0,0,10,22a1,1,0,0,0,.45-.11l4-2A1,1,0,0,0,15,19V14.41l6.12-6.12a2.81,2.81,0,0,0,.59-.86l0-.06A3,3,0,0,0,22,6.17V5A3,3,0,0,0,19,2ZM13.29,13.29A1,1,0,0,0,13,14v4.38l-2,1V14a1,1,0,0,0-.29-.71L5.41,8H18.59ZM20,6H4V5A1,1,0,0,1,5,4H19a1,1,0,0,1,1,1Z"/></svg>
<span class="t" style="left:1562.70px;top:751.20px;font-size:14px;line-height:20px;color:#ccccdc;letter-spacing:0.482px;-webkit-text-stroke:0.3px #ccccdc;">Operations Rate</span>
<svg class="i" style="left:1675.50px;top:754.00px" width="16" height="16" viewBox="0 0 24 24" fill="#8e8f9b"><path d="M19,2H5A3,3,0,0,0,2,5V6.17a3,3,0,0,0,.25,1.2l0,.06a2.81,2.81,0,0,0,.59.86L9,14.41V21a1,1,0,0,0,.47.85A1,1,0,0,0,10,22a1,1,0,0,0,.45-.11l4-2A1,1,0,0,0,15,19V14.41l6.12-6.12a2.81,2.81,0,0,0,.59-.86l0-.06A3,3,0,0,0,22,6.17V5A3,3,0,0,0,19,2ZM13.29,13.29A1,1,0,0,0,13,14v4.38l-2,1V14a1,1,0,0,0-.29-.71L5.41,8H18.59ZM20,6H4V5A1,1,0,0,1,5,4H19a1,1,0,0,1,1,1Z"/></svg>
<span class="t" style="left:1736.90px;top:751.20px;font-size:14px;line-height:20px;color:#ccccdc;letter-spacing:0.440px;-webkit-text-stroke:0.3px #ccccdc;">Transfers Rate</span>
<svg class="i" style="left:1838.80px;top:754.00px" width="16" height="16" viewBox="0 0 24 24" fill="#8e8f9b"><path d="M19,2H5A3,3,0,0,0,2,5V6.17a3,3,0,0,0,.25,1.2l0,.06a2.81,2.81,0,0,0,.59.86L9,14.41V21a1,1,0,0,0,.47.85A1,1,0,0,0,10,22a1,1,0,0,0,.45-.11l4-2A1,1,0,0,0,15,19V14.41l6.12-6.12a2.81,2.81,0,0,0,.59-.86l0-.06A3,3,0,0,0,22,6.17V5A3,3,0,0,0,19,2ZM13.29,13.29A1,1,0,0,0,13,14v4.38l-2,1V14a1,1,0,0,0-.29-.71L5.41,8H18.59ZM20,6H4V5A1,1,0,0,1,5,4H19a1,1,0,0,1,1,1Z"/></svg>
<div class="hl" style="left:25px;top:811px;width:1855px"></div>
<div class="hl" style="left:25px;top:847px;width:1855px"></div>
<div class="hl" style="left:25px;top:883px;width:1855px"></div>
<div class="hl" style="left:25px;top:919px;width:1855px"></div>
<div class="vl" style="left:193px;top:776px;height:180px"></div>
<div class="vl" style="left:361px;top:776px;height:180px"></div>
<div class="vl" style="left:530px;top:776px;height:180px"></div>
<div class="vl" style="left:699px;top:776px;height:180px"></div>
<div class="vl" style="left:1036px;top:776px;height:180px"></div>
<div class="vl" style="left:1204px;top:776px;height:180px"></div>
<div class="vl" style="left:1373px;top:776px;height:180px"></div>
<div class="vl" style="left:1542px;top:776px;height:180px"></div>
<div class="vl" style="left:1710px;top:776px;height:180px"></div>
<svg class="i" style="left:86.00px;top:752.30px" width="18" height="18" viewBox="0 0 24 24" fill="#ccccdc"><path d="M17.71,11.29l-5-5a1,1,0,0,0-.33-.21,1,1,0,0,0-.76,0,1,1,0,0,0-.33.21l-5,5a1,1,0,0,0,1.42,1.42L11,9.41V17a1,1,0,0,0,2,0V9.410l3.290,3.300a1,1,0,0,0,1.420,0A1,1,0,0,0,17.710,11.290Z"/></svg>
<div class="b" style="left:700px;top:776px;width:167px;height:180px;background:#f2495c;border-right:1px solid #f95a6c"></div>
<span class="t" style="left:31.00px;top:784.30px;font-size:14px;line-height:20px;color:#ccccdc;letter-spacing:0.692px;">00001</span>
<span class="t" style="left:427.55px;top:784.30px;font-size:14px;line-height:20px;color:#ccccdc;letter-spacing:-0.213px;">TDEV</span>
<div class="clip" style="left:531px;top:776px;width:168px;height:35px">
<span class="t" style="left:0.65px;top:8.30px;font-size:14px;line-height:20px;color:#ccccdc;letter-spacing:0.762px;">6.00009700002978e+31</span>
</div>
<span class="t" style="left:741.65px;top:784.30px;font-size:14px;line-height:20px;color:#f7f8fa;letter-spacing:0.715px;">Not Mapped</span>
<span class="t" style="left:1092.05px;top:784.30px;font-size:14px;line-height:20px;color:#ccccdc;letter-spacing:0.207px;">10.2 MiB</span>
<span class="t" style="left:1278.05px;top:784.30px;font-size:14px;line-height:20px;color:#ccccdc;letter-spacing:0.342px;">0 B</span>
<div class="b" style="left:1380px;top:783px;width:83px;height:22px;border-radius:2px;background:rgba(204,204,220,0.06)"></div>
<div class="b" style="left:1380px;top:783px;width:1px;height:22px;border-radius:1px 0 0 1px;background:#73bf69"></div>
<span class="t" style="left:1492.00px;top:783.20px;font-size:14px;line-height:20px;color:#d5d5e3;letter-spacing:0.296px;">0.0%</span>
<span class="t" style="left:31.00px;top:820.30px;font-size:14px;line-height:20px;color:#ccccdc;letter-spacing:1.267px;">00002</span>
<span class="t" style="left:414.40px;top:820.30px;font-size:14px;line-height:20px;color:#ccccdc;letter-spacing:0.274px;">Int+TDEV</span>
<div class="clip" style="left:531px;top:812px;width:168px;height:35px">
<span class="t" style="left:0.65px;top:8.30px;font-size:14px;line-height:20px;color:#ccccdc;letter-spacing:0.762px;">6.00009700002978e+31</span>
</div>
<span class="t" style="left:741.65px;top:820.30px;font-size:14px;line-height:20px;color:#f7f8fa;letter-spacing:0.715px;">Not Mapped</span>
<span class="t" style="left:1094.65px;top:820.30px;font-size:14px;line-height:20px;color:#ccccdc;letter-spacing:-0.425px;">11.8 GiB</span>
<span class="t" style="left:1263.15px;top:820.30px;font-size:14px;line-height:20px;color:#ccccdc;letter-spacing:-0.425px;">11.8 GiB</span>
<div class="b" style="left:1380px;top:819px;width:87px;height:22px;border-radius:2px;background:linear-gradient(90deg,#73bf69,#73bf69 40%,#fade2a 82%,#f2495c)"></div>
<span class="t" style="left:1477.00px;top:819.20px;font-size:14px;line-height:20px;color:#d5d5e3;letter-spacing:0.063px;">100.0%</span>
<span class="t" style="left:31.00px;top:856.30px;font-size:14px;line-height:20px;color:#ccccdc;letter-spacing:1.442px;">00003</span>
<span class="t" style="left:414.40px;top:856.30px;font-size:14px;line-height:20px;color:#ccccdc;letter-spacing:0.274px;">Int+TDEV</span>
<div class="clip" style="left:531px;top:848px;width:168px;height:35px">
<span class="t" style="left:0.65px;top:8.30px;font-size:14px;line-height:20px;color:#ccccdc;letter-spacing:0.762px;">6.00009700002978e+31</span>
</div>
<span class="t" style="left:741.65px;top:856.30px;font-size:14px;line-height:20px;color:#f7f8fa;letter-spacing:0.715px;">Not Mapped</span>
<span class="t" style="left:1094.65px;top:856.30px;font-size:14px;line-height:20px;color:#ccccdc;letter-spacing:-0.425px;">11.8 GiB</span>
<span class="t" style="left:1263.15px;top:856.30px;font-size:14px;line-height:20px;color:#ccccdc;letter-spacing:-0.425px;">11.8 GiB</span>
<div class="b" style="left:1380px;top:855px;width:87px;height:22px;border-radius:2px;background:linear-gradient(90deg,#73bf69,#73bf69 40%,#fade2a 82%,#f2495c)"></div>
<span class="t" style="left:1477.00px;top:855.20px;font-size:14px;line-height:20px;color:#d5d5e3;letter-spacing:0.063px;">100.0%</span>
<span class="t" style="left:31.00px;top:892.30px;font-size:14px;line-height:20px;color:#ccccdc;letter-spacing:1.442px;">00004</span>
<span class="t" style="left:414.40px;top:892.30px;font-size:14px;line-height:20px;color:#ccccdc;letter-spacing:0.274px;">Int+TDEV</span>
<div class="clip" style="left:531px;top:884px;width:168px;height:35px">
<span class="t" style="left:0.65px;top:8.30px;font-size:14px;line-height:20px;color:#ccccdc;letter-spacing:0.762px;">6.00009700002978e+31</span>
</div>
<span class="t" style="left:741.65px;top:892.30px;font-size:14px;line-height:20px;color:#f7f8fa;letter-spacing:0.715px;">Not Mapped</span>
<span class="t" style="left:1092.50px;top:892.30px;font-size:14px;line-height:20px;color:#ccccdc;letter-spacing:0.189px;">73.8 GiB</span>
<span class="t" style="left:1261.00px;top:892.30px;font-size:14px;line-height:20px;color:#ccccdc;letter-spacing:0.189px;">73.8 GiB</span>
<div class="b" style="left:1380px;top:891px;width:87px;height:22px;border-radius:2px;background:linear-gradient(90deg,#73bf69,#73bf69 40%,#fade2a 82%,#f2495c)"></div>
<span class="t" style="left:1477.00px;top:891.20px;font-size:14px;line-height:20px;color:#d5d5e3;letter-spacing:0.063px;">100.0%</span>
<span class="t" style="left:31.00px;top:928.30px;font-size:14px;line-height:20px;color:#ccccdc;letter-spacing:1.442px;">00005</span>
<span class="t" style="left:414.40px;top:928.30px;font-size:14px;line-height:20px;color:#ccccdc;letter-spacing:0.274px;">Int+TDEV</span>
<div class="clip" style="left:531px;top:920px;width:168px;height:35px">
<span class="t" style="left:0.65px;top:8.30px;font-size:14px;line-height:20px;color:#ccccdc;letter-spacing:0.762px;">6.00009700002978e+31</span>
</div>
<span class="t" style="left:741.65px;top:928.30px;font-size:14px;line-height:20px;color:#f7f8fa;letter-spacing:0.715px;">Not Mapped</span>
<span class="t" style="left:1092.50px;top:928.30px;font-size:14px;line-height:20px;color:#ccccdc;letter-spacing:0.189px;">73.8 GiB</span>
<span class="t" style="left:1261.00px;top:928.30px;font-size:14px;line-height:20px;color:#ccccdc;letter-spacing:0.189px;">73.8 GiB</span>
<div class="b" style="left:1380px;top:927px;width:87px;height:22px;border-radius:2px;background:linear-gradient(90deg,#73bf69,#73bf69 40%,#fade2a 82%,#f2495c)"></div>
<span class="t" style="left:1477.00px;top:927.20px;font-size:14px;line-height:20px;color:#d5d5e3;letter-spacing:0.063px;">100.0%</span>
<div class="pg" style="left:703px;top:1002px;width:32px;background:rgba(204,204,220,0.045);border:0"></div>
<svg class="i" style="left:711.00px;top:1006.00px" width="16" height="16" viewBox="0 0 24 24" fill="#7b7c88"><path d="M11.29,12l3.54-3.54a1,1,0,0,0,0-1.41,1,1,0,0,0-1.42,0L9.17,11.29a1,1,0,0,0,0,1.42L13.41,17a1,1,0,0,0,.71.29,1,1,0,0,0,.71-.29,1,1,0,0,0,0-1.41Z"/></svg>
<div class="pg" style="left:745px;top:1002px;width:21px;background:#3d71d9"></div>
<span class="t" style="left:752.16px;top:1005.30px;font-size:12px;line-height:18px;color:#ffffff;-webkit-text-stroke:0.3px #ffffff;">1</span>
<div class="pg" style="left:776px;top:1002px;width:24px"></div>
<span class="t" style="left:784.66px;top:1005.30px;font-size:12px;line-height:18px;color:#ccccdc;-webkit-text-stroke:0.3px #ccccdc;">2</span>
<div class="pg" style="left:810px;top:1002px;width:23px"></div>
<span class="t" style="left:818.16px;top:1005.30px;font-size:12px;line-height:18px;color:#ccccdc;-webkit-text-stroke:0.3px #ccccdc;">3</span>
<div class="pg" style="left:843px;top:1002px;width:24px"></div>
<span class="t" style="left:851.66px;top:1005.30px;font-size:12px;line-height:18px;color:#ccccdc;-webkit-text-stroke:0.3px #ccccdc;">4</span>
<div class="pg" style="left:877px;top:1002px;width:24px"></div>
<span class="t" style="left:885.66px;top:1005.30px;font-size:12px;line-height:18px;color:#ccccdc;-webkit-text-stroke:0.3px #ccccdc;">5</span>
<div class="pg" style="left:911px;top:1002px;width:24px"></div>
<span class="t" style="left:919.66px;top:1005.30px;font-size:12px;line-height:18px;color:#ccccdc;-webkit-text-stroke:0.3px #ccccdc;">6</span>
<div class="pg" style="left:945px;top:1002px;width:23px"></div>
<span class="t" style="left:953.16px;top:1005.30px;font-size:12px;line-height:18px;color:#ccccdc;-webkit-text-stroke:0.3px #ccccdc;">7</span>
<svg class="i" style="left:979.00px;top:1007.50px" width="14" height="14" viewBox="0 0 24 24" fill="#ccccdc"><circle cx="4.500" cy="12" r="1.900"/><circle cx="12" cy="12" r="1.900"/><circle cx="19.500" cy="12" r="1.900"/></svg>
<div class="pg" style="left:1004px;top:1002px;width:38px"></div>
<span class="t" style="left:1012.75px;top:1005.30px;font-size:12px;line-height:18px;color:#ccccdc;letter-spacing:0.238px;-webkit-text-stroke:0.3px #ccccdc;">827</span>
<div class="pg" style="left:1052px;top:1002px;width:32px"></div>
<svg class="i" style="left:1060.00px;top:1006.00px" width="16" height="16" viewBox="0 0 24 24" fill="#ccccdc"><path d="M14.83,11.29,10.59,7.05a1,1,0,0,0-1.42,0,1,1,0,0,0,0,1.41L12.71,12,9.17,15.54a1,1,0,0,0,0,1.41,1,1,0,0,0,.71.29,1,1,0,0,0,.71-.29l4.24-4.24A1,1,0,0,0,14.83,11.29Z"/></svg>
<span class="t" style="left:1099.60px;top:1005.30px;font-size:12px;line-height:18px;color:#a3a4b2;letter-spacing:0.432px;">1 - 5 of 4134 rows</span>
<div class="b" style="left:1905px;top:0px;width:14px;height:1079px;background:#2c2c2c"></div>
<svg class="i" style="left:1905px;top:0" width="14" height="1079" viewBox="0 0 14 1079"><path d="M7.500 4.600 12.100 12H2.900Z" fill="#9f9f9f"/><rect x="3" y="18" width="9" height="573" rx="4.500" fill="#cfcfcf"/><path d="M7.500 1076.400 12.100 1069H2.900Z" fill="#9f9f9f"/></svg>
</body></html>
